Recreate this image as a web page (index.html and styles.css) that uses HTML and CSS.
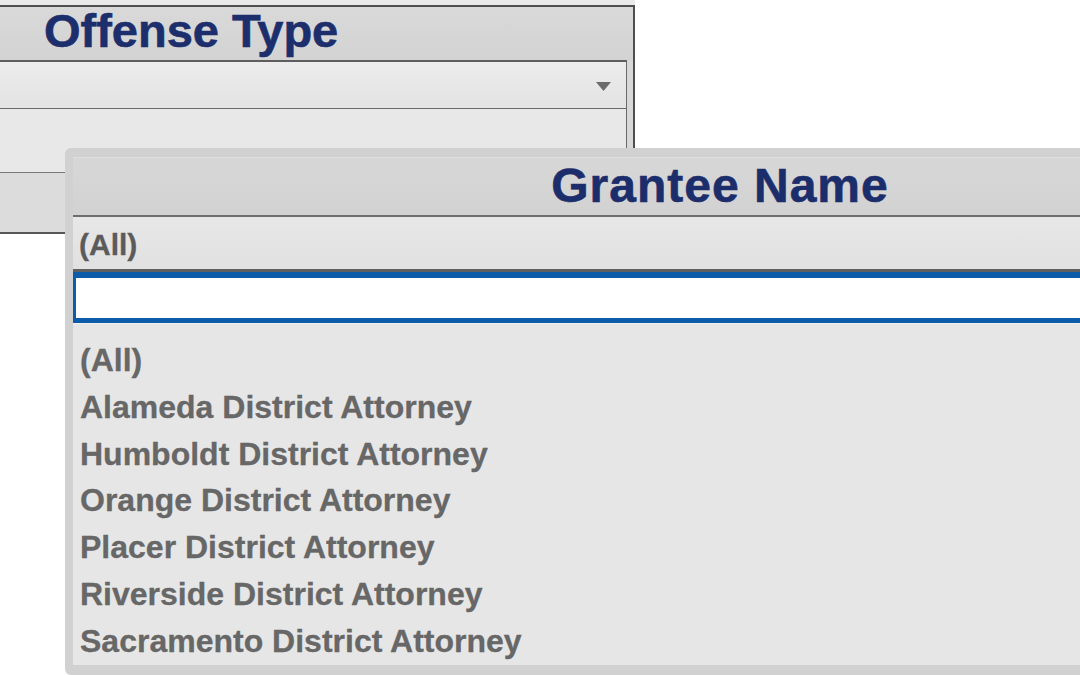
FILE: index.html
```html
<!DOCTYPE html>
<html>
<head>
<meta charset="utf-8">
<link rel="stylesheet" href="styles.css">
</head>
<body>
<div class="stage">
  <div class="strip"></div>
  <div class="back">
    <div class="back-head">Offense Type</div>
    <div class="back-body">
      <div class="dd-select">
        <svg class="dd-arrow" width="15" height="9" viewBox="0 0 15 9"><path d="M0 0 H15 L7.5 9 Z" fill="#6b6b6b"/></svg>
      </div>
      <div class="dd-list"></div>
    </div>
    <div class="back-foot"></div>
  </div>

  <div class="popup">
    <div class="p-head">Grantee Name</div>
    <div class="p-sel">(All)</div>
    <div class="p-input"></div>
    <ul class="p-list">
      <li>(All)</li>
      <li>Alameda District Attorney</li>
      <li>Humboldt District Attorney</li>
      <li>Orange District Attorney</li>
      <li>Placer District Attorney</li>
      <li>Riverside District Attorney</li>
      <li>Sacramento District Attorney</li>
    </ul>
  </div>
</div>
</body>
</html>
```

FILE: styles.css
```css
* { box-sizing: border-box; }
html, body { margin: 0; padding: 0; background: #ffffff; }
body { font-family: "Liberation Sans", Arial, sans-serif; }

.stage {
  position: relative;
  width: 1080px;
  height: 675px;
  overflow: hidden;
  background: #ffffff;
}

.strip {
  width: 635px;
  height: 5px;
  background: #e9e9e9;
}

.back {
  width: 635px;
  background: #d8d8d8;
  border-top: 2px solid #4f4f4f;
  border-right: 2px solid #4f4f4f;
  border-bottom: 2px solid #575757;
}

.back-head {
  height: 53px;
  padding: 0 0 6px 44px;
  line-height: 48px;
  font-size: 47px;
  font-weight: bold;
  color: #1c2e6b;
  -webkit-text-stroke: 0.6px #1c2e6b;
  background: linear-gradient(#d9d9d9, #d3d3d3);
  white-space: nowrap;
}

.back-body {
  margin-right: 6px;
  border-top: 2px solid #5e5e5e;
  border-right: 1px solid #6a6a6a;
  border-bottom: 1px solid #777777;
}

.dd-select {
  height: 47px;
  display: flex;
  align-items: center;
  justify-content: flex-end;
  padding: 2px 15px 0 0;
  background: linear-gradient(#ececec, #e3e3e3);
  border-bottom: 1px solid #6a6a6a;
}

.dd-list {
  height: 63px;
  background: #e8e8e8;
}

.back-foot {
  height: 59px;
  background: #dcdcdc;
}

.popup {
  position: absolute;
  left: 65px;
  top: 148px;
  width: 1310px;
  padding: 9px 8px 10px 8px;
  background: #d1d1d1;
  border-radius: 6px;
}

.p-head {
  height: 60px;
  border-top: 1px solid #dedede;
  border-bottom: 2px solid #6e6e6e;
  background: linear-gradient(#d7d7d7, #d2d2d2);
  text-align: center;
  font-size: 48px;
  font-weight: bold;
  letter-spacing: 1px;
  line-height: 56px;
  color: #1b2d6b;
  -webkit-text-stroke: 0.6px #1b2d6b;
  white-space: nowrap;
}

.p-sel {
  height: 55px;
  padding: 4px 0 0 6px;
  line-height: 48px;
  font-size: 30px;
  font-weight: bold;
  color: #5b5b5b;
  -webkit-text-stroke: 0.3px #5b5b5b;
  background: linear-gradient(#e7e7e7, #e1e1e1);
  border-bottom: 3px solid #5f5f5f;
}

.p-input {
  height: 51px;
  background: #ffffff;
  border-style: solid;
  border-color: #0c5ca9;
  border-width: 6px 3px 5px 3px;
}

.p-list {
  list-style: none;
  margin: 0;
  padding: 13px 0 0 7px;
  border-top: 1px solid #f1f1f1;
  background: #e6e6e6;
  height: 342px;
}

.p-list li {
  font-size: 32px;
  font-weight: bold;
  line-height: 46.8px;
  color: #676767;
  -webkit-text-stroke: 0.3px #676767;
  white-space: nowrap;
}
```
